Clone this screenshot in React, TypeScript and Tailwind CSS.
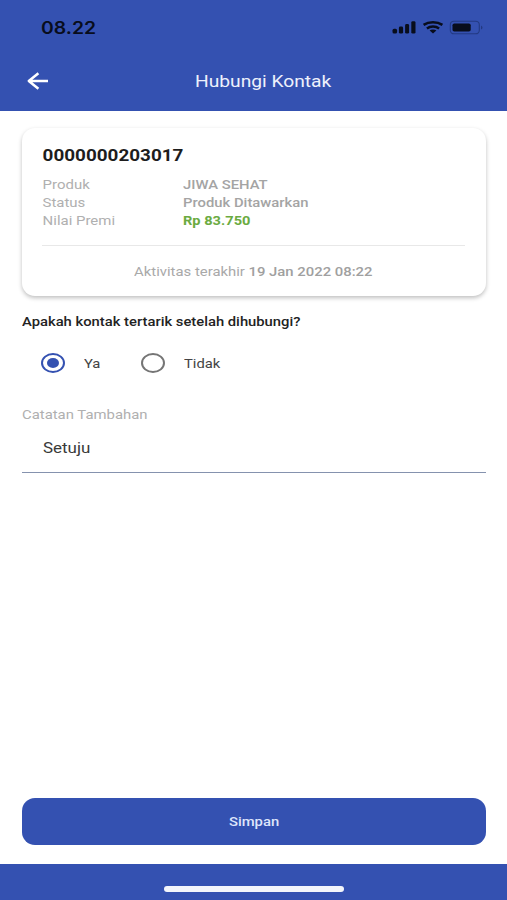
import type { ReactNode } from "react";

function Wide({ className = "scale-x-[1.145]", children }: { className?: string; children: ReactNode }) {
  return (
    <span className={`block w-max origin-left whitespace-nowrap ${className}`}>{children}</span>
  );
}

function StatusIcons() {
  return (
    <svg className="h-5 w-[96px]" viewBox="0 0 96 20" fill="none">
      <g fill="#080d1c">
        <rect x="2.5" y="11.8" width="4.6" height="4.8" rx="1.6" />
        <rect x="8.9" y="9.6" width="4.2" height="7" rx="1.4" />
        <rect x="15.1" y="7" width="4" height="9.6" rx="1.4" />
        <rect x="21.3" y="4.2" width="4.2" height="12.4" rx="1.4" />
        <path d="M43 12.4c1.4 0 2.5.4 3.4 1.1L43 16.6l-3.4-3.1c.9-.7 2-1.1 3.4-1.1Z" />
        <rect x="62.5" y="6.4" width="18.2" height="8.2" rx="1.8" />
      </g>
      <path d="M33.6 7.9c5.3-3.6 13.5-3.6 18.8 0M36.9 11.4c3.4-2.4 8.8-2.4 12.2 0" stroke="#080d1c" strokeWidth="2.5" />
      <rect x="60.3" y="4.2" width="29" height="12.6" rx="3.6" stroke="#233a82" strokeWidth="1.1" />
      <path d="M91 8.4c2 .8 2 3.4 0 4.2Z" fill="#233a82" />
    </svg>
  );
}

function Header() {
  return (
    <header className="h-[110.5px] bg-[#3451b1]">
      <div className="flex h-[54px] items-center justify-between pl-[41px] pr-[21px]">
        <Wide className="scale-x-[1.14] pt-[3px] font-['Inter'] text-[17px] font-semibold text-[#080d1c]">08.22</Wide>
        <StatusIcons />
      </div>
      <div className="flex h-[54px] items-center pl-[27px]">
        <svg className="h-[18px] w-[22px] shrink-0" viewBox="0 0 22 18" fill="none" stroke="white" strokeWidth="2.5" strokeLinejoin="round">
          <path d="M21 9H2M11.4 1.2 1.8 9l9.6 7.8" />
        </svg>
        <Wide className="ml-[146px] mt-[2px] scale-x-[1.2] text-[16px] text-[#eef1fc]">Hubungi Kontak</Wide>
      </div>
    </header>
  );
}

const rows = [
  { label: "Produk", value: "JIWA SEHAT", tone: "scale-x-[1.14] font-medium text-[#a4a4a4]" },
  { label: "Status", value: "Produk Ditawarkan", tone: "scale-x-[1.14] font-medium text-[#a4a4a4]" },
  { label: "Nilai Premi", value: "Rp 83.750", tone: "scale-x-[1.125] font-bold text-[#6bab41]" },
];

function ContactCard() {
  return (
    <section className="h-[168px] rounded-[13px] bg-white px-[20.5px] pt-[18px] shadow-[0_2px_4px_rgba(0,0,0,0.25)]">
      <Wide className="scale-x-[1.18] pl-[0.5px] text-[16px] font-bold leading-5 text-[#1d1d1d]">0000000203017</Wide>
      <dl className="mt-[10px]">
        {rows.map((row) => (
          <div key={row.label} className="grid h-[18px] grid-cols-[141px_1fr] leading-[18px]">
            <dt><Wide className="scale-x-[1.15] pl-[0.5px] text-[#b0b0b0]">{row.label}</Wide></dt>
            <dd><Wide className={row.tone}>{row.value}</Wide></dd>
          </div>
        ))}
      </dl>
      <div className="mt-[15px] border-t border-[#e8e8e8] pt-[17px]">
        <div className="flex justify-center leading-[18px] text-[#a9a9a9]">
          <span className="scale-x-[1.143] whitespace-nowrap">
            Aktivitas terakhir <b className="font-medium text-[#a0a0a0]">19 Jan 2022 08:22</b>
          </span>
        </div>
      </div>
    </section>
  );
}

function Radio({ checked, label }: { checked?: boolean; label: string }) {
  return (
    <label className="flex w-[100px] items-center gap-[19px]">
      <span
        className={`flex h-5 w-6 shrink-0 items-center justify-center rounded-[50%] border-2 ${checked ? "border-[#3451b1]" : "border-[#757575]"}`}
      >
        {checked && <span className="h-[10px] w-3 rounded-[50%] bg-[#3451b1]" />}
      </span>
      <Wide className="scale-x-[1.14] pt-[2px] text-[#444]">{label}</Wide>
    </label>
  );
}

export default function App() {
  return (
    <div className="flex h-[900px] w-[507px] flex-col overflow-hidden bg-white font-['Roboto',sans-serif] text-[13px]">
      <Header />
      <main className="flex flex-1 flex-col px-[21.5px] pt-[17px]">
        <ContactCard />
        <Wide className="mt-[17px] scale-x-[1.137] text-[13px] font-medium leading-[18px] text-[#222]">
          Apakah kontak tertarik setelah dihubungi?
        </Wide>
        <div className="mt-[21.5px] flex pl-[19px]">
          <Radio checked label="Ya" />
          <Radio label="Tidak" />
        </div>
        <Wide className="mt-[32px] scale-x-[1.145] leading-[18px] text-[#b0b0b0]">Catatan Tambahan</Wide>
        <div className="mt-[7px] h-[42px] border-b-[1.5px] border-[#8592ae] pl-[21px] pt-[7px]">
          <Wide className="scale-x-[1.13] text-[15px] leading-5 text-[#3a3a3a]">Setuju</Wide>
        </div>
        <button className="mb-[19px] mt-auto flex h-[47px] items-center justify-center rounded-[13px] bg-[#3451b1] pl-px pt-px text-[#dfe5fb]">
          <span className="scale-x-[1.14] font-medium">Simpan</span>
        </button>
      </main>
      <footer className="flex h-[36.5px] justify-center bg-[#3451b1] pt-[22px]">
        <div className="h-[6px] w-[180px] rounded-full bg-[#f3f5fb]" />
      </footer>
    </div>
  );
}
